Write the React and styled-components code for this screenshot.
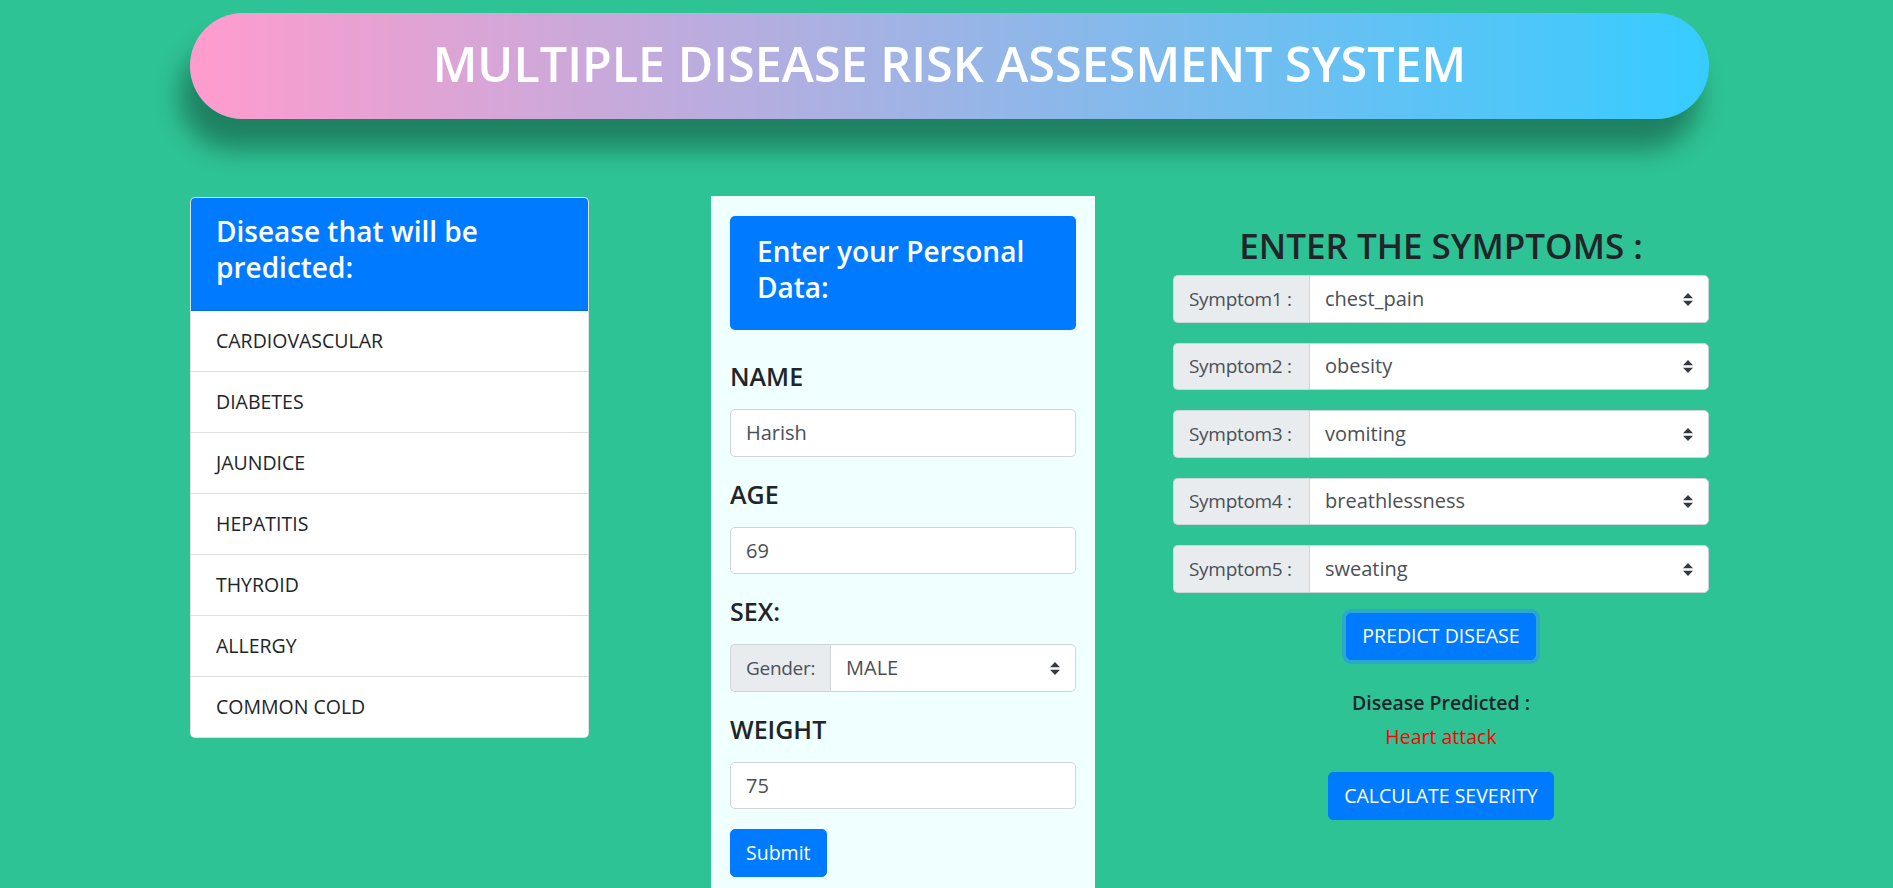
import React from 'react'
import styled, { createGlobalStyle, css } from 'styled-components'

const GlobalStyle = createGlobalStyle`
  body {
    margin: 0;
    background-color: #2ec394;
    font-family: 'Open Sans', 'Noto Sans', sans-serif;
    color: #212529;
  }
  * {
    box-sizing: border-box;
  }
`

const arrows = `url("data:image/svg+xml,%3csvg xmlns='http://www.w3.org/2000/svg' width='4' height='5' viewBox='0 0 4 5'%3e%3cpath fill='%23343a40' d='M2 0L0 2h4zm0 5L0 3h4z'/%3e%3c/svg%3e")`

const Page = styled.div`
  width: 1519px;
  margin-left: 190px;
  padding-top: 13px;
`

const Banner = styled.header`
  height: 106px;
  padding-bottom: 6px;
  border-radius: 53px;
  background: linear-gradient(to right, #ff9ccd, #36ccff);
  box-shadow: -10px 30px 26px rgba(0, 0, 0, 0.34);
  display: flex;
  align-items: center;
  justify-content: center;
`

const BannerTitle = styled.h1`
  margin: 0;
  color: #ffffff;
  font-size: 48.5px;
  font-weight: 600;
  line-height: 58px;
`

const Content = styled.main`
  display: flex;
  align-items: flex-start;
  margin-top: 77px;
`

const DiseaseCard = styled.section`
  width: 399px;
  margin-top: 1px;
  background-color: #ffffff;
  border: 1px solid rgba(0, 0, 0, 0.125);
  border-radius: 5px;
  overflow: hidden;
`

const CardHeader = styled.div`
  background-color: #007bff;
  padding: 15px 25px 15px;
  border-bottom: 1px solid rgba(0, 0, 0, 0.125);
`

const HeaderTitle = styled.h4`
  margin: 0 0 10px;
  color: #ffffff;
  font-size: 28px;
  font-weight: 600;
  line-height: 36px;
`

const ListItem = styled.div`
  padding: 15px 25px;
  font-size: 19.5px;
  line-height: 30px;
  border-top: ${(p) => (p.$first ? 'none' : '1px solid rgba(0, 0, 0, 0.125)')};
`

const FormPanel = styled.section`
  width: 384px;
  margin-left: 122px;
  padding: 20px 19px 19px;
  background-color: #f0ffff;
  display: flex;
  flex-direction: column;
`

const FormHeader = styled.div`
  background-color: #007bff;
  border-radius: 5px;
  padding: 17px 27px 25px;
  margin-bottom: 9px;
`

const FormTitle = styled.h4`
  margin: 0;
  color: #ffffff;
  font-size: 28px;
  font-weight: 600;
  line-height: 36px;
`

const FieldLabel = styled.h5`
  margin: 22px 0 18px;
  font-size: 25px;
  font-weight: 600;
  line-height: 30px;
`

const fieldBase = css`
  height: 47.5px;
  padding: 7.5px 15px;
  font-family: inherit;
  font-size: 20px;
  line-height: 30px;
  color: #495057;
  background-color: #ffffff;
  border: 1.25px solid #ced4da;
  border-radius: 5px;
  outline: none;
`

const TextInput = styled.input`
  ${fieldBase}
  display: block;
  width: 100%;
`

const InputGroup = styled.div`
  display: flex;
  width: 100%;
  margin-bottom: ${(p) => p.$gap || 0}px;
`

const GroupLabel = styled.span`
  display: flex;
  align-items: center;
  flex: 0 0 ${(p) => p.$width}px;
  height: 47.5px;
  padding: 0 0 0 15px;
  font-size: 19px;
  letter-spacing: -0.3px;
  color: #495057;
  background-color: #e9ecef;
  border: 1.25px solid #ced4da;
  border-right: none;
  border-radius: 5px 0 0 5px;
  white-space: nowrap;
`

const Select = styled.select`
  ${fieldBase}
  flex: 1;
  min-width: 0;
  border-radius: 0 5px 5px 0;
  appearance: none;
  background-image: ${arrows};
  background-repeat: no-repeat;
  background-position: right 15px center;
  background-size: 10px 12.5px;
`

const Button = styled.button`
  align-self: ${(p) => (p.$start ? 'flex-start' : 'center')};
  height: 47.5px;
  padding: 7.5px 15px;
  font-family: inherit;
  font-size: 19.5px;
  line-height: 30px;
  color: #ffffff;
  background-color: #007bff;
  border: 1.25px solid #007bff;
  border-radius: 5px;
  cursor: pointer;
  margin-top: ${(p) => p.$top || 0}px;
  box-shadow: ${(p) => (p.$focused ? '0 0 0 4px rgba(38, 143, 255, 0.5)' : 'none')};
`

const SymptomColumn = styled.section`
  width: 536px;
  margin-left: 78px;
  padding-top: 26px;
  display: flex;
  flex-direction: column;
  align-items: center;
`

const SymptomTitle = styled.h2`
  margin: 0 0 5px;
  font-size: 35px;
  font-weight: 600;
  line-height: 48px;
`

const ResultLabel = styled.div`
  margin-top: 28px;
  font-size: 19.5px;
  font-weight: 600;
  line-height: 30px;
`

const ResultValue = styled.div`
  margin-top: 4px;
  font-size: 19.5px;
  line-height: 30px;
  color: #ff0000;
`

const diseases = [
  'CARDIOVASCULAR',
  'DIABETES',
  'JAUNDICE',
  'HEPATITIS',
  'THYROID',
  'ALLERGY',
  'COMMON COLD',
]

const symptoms = ['chest_pain', 'obesity', 'vomiting', 'breathlessness', 'sweating']

const App = () => {
  return (
    <>
      <GlobalStyle />
      <Page>
        <Banner>
          <BannerTitle>MULTIPLE DISEASE RISK ASSESMENT SYSTEM</BannerTitle>
        </Banner>

        <Content>
          <DiseaseCard>
            <CardHeader>
              <HeaderTitle>
                Disease that will be
                <br />
                predicted:
              </HeaderTitle>
            </CardHeader>
            {diseases.map((name, i) => (
              <ListItem key={name} $first={i === 0}>
                {name}
              </ListItem>
            ))}
          </DiseaseCard>

          <FormPanel>
            <FormHeader>
              <FormTitle>
                Enter your Personal
                <br />
                Data:
              </FormTitle>
            </FormHeader>
            <FieldLabel>NAME</FieldLabel>
            <TextInput defaultValue="Harish" />
            <FieldLabel>AGE</FieldLabel>
            <TextInput defaultValue="69" />
            <FieldLabel>SEX:</FieldLabel>
            <InputGroup>
              <GroupLabel $width={100}>Gender:</GroupLabel>
              <Select defaultValue="MALE">
                <option>MALE</option>
                <option>FEMALE</option>
              </Select>
            </InputGroup>
            <FieldLabel>WEIGHT</FieldLabel>
            <TextInput defaultValue="75" />
            <Button $top={20} $start>
              Submit
            </Button>
          </FormPanel>

          <SymptomColumn>
            <SymptomTitle>ENTER THE SYMPTOMS :</SymptomTitle>
            {symptoms.map((s, i) => (
              <InputGroup key={s} $gap={20}>
                <GroupLabel $width={136}>Symptom{i + 1} :</GroupLabel>
                <Select defaultValue={s}>
                  <option>{s}</option>
                </Select>
              </InputGroup>
            ))}
            <Button $focused>PREDICT DISEASE</Button>
            <ResultLabel>Disease Predicted :</ResultLabel>
            <ResultValue>Heart attack</ResultValue>
            <Button $top={20}>CALCULATE SEVERITY</Button>
          </SymptomColumn>
        </Content>
      </Page>
    </>
  )
}

export default App
